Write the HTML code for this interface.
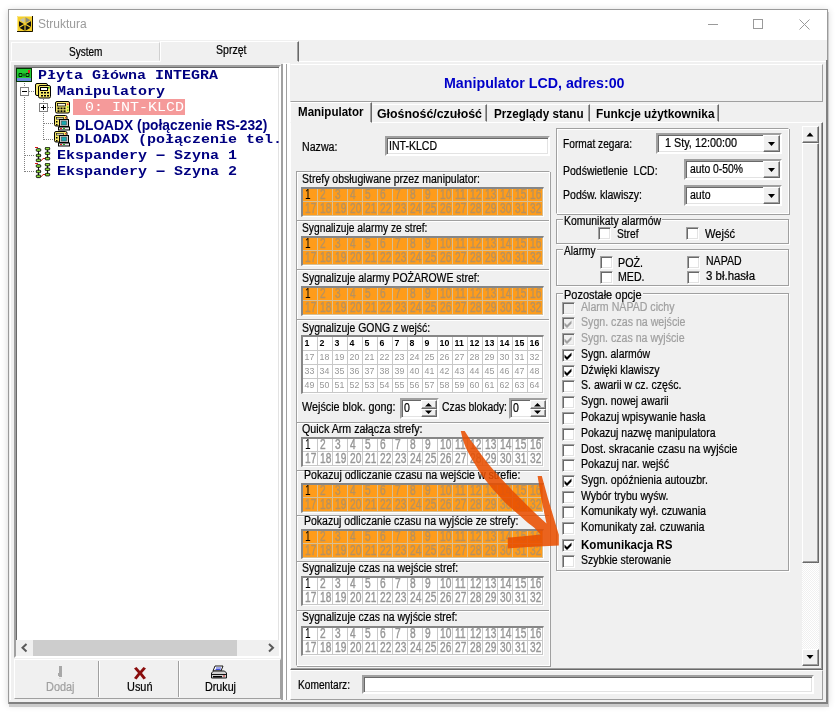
<!DOCTYPE html><html lang="pl"><head><meta charset="utf-8"><title>Struktura</title><style>
*{box-sizing:border-box;margin:0;padding:0}
html,body{width:836px;height:714px;overflow:hidden;background:#fff}
body{position:relative;font-family:"Liberation Sans",sans-serif;font-size:12px;color:#000}
.a{position:absolute}
.t{position:absolute;white-space:pre;font-size:12px;line-height:14px;transform:scaleX(.88);transform-origin:0 0;-webkit-text-stroke:.22px currentColor}
.tb{position:absolute;white-space:pre;font-size:12px;line-height:14px;font-weight:bold;transform:scaleX(.96);transform-origin:0 0}
.dis{color:#a0a0a0}
#win{left:8px;top:9px;width:820px;height:695px;border:1px solid #9a9a9a;background:#f0f0f0;box-shadow:1px 3px 0 0 #cbcbcb,0 1px 7px rgba(0,0,0,.16)}
#title{left:9px;top:10px;width:818px;height:30px;background:#fff}
.sunk{border:1px solid;border-color:#a0a0a0 #fff #fff #a0a0a0}
.sunk2{border:2px solid;border-color:#a0a0a0 #fff #fff #a0a0a0;box-shadow:inset 1px 1px 0 #696969,inset -1px -1px 0 #e3e3e3;background:#fff}
.raise{border:1px solid;border-color:#fff #a0a0a0 #a0a0a0 #fff}
.grp{position:absolute;border:1px solid;border-color:#a0a0a0 #fff #fff #a0a0a0;box-shadow:inset 1px 1px 0 #fff,1px 1px 0 #a0a0a0}
.fs{position:absolute;border:1px solid #a0a0a0;box-shadow:inset 1px 1px 0 #fff,1px 1px 0 #fff}
.cb{position:absolute;width:13px;height:13px;border:1px solid;border-color:#a0a0a0 #fff #fff #a0a0a0;box-shadow:inset 1px 1px 0 #696969,inset -1px -1px 0 #e3e3e3;background:#fff}
.cb.d{background:#f0f0f0}
.tree{position:absolute;white-space:pre;font:bold 15px/16px "Liberation Mono",monospace;color:#000080;transform:scaleY(.88);transform-origin:0 13px}
.grid{position:absolute;border-style:solid;border-width:2px 1px 1px 2px;border-color:#868686 #fff #fff #868686}
.grid i{position:absolute;font-style:normal;white-space:pre;font-size:14.5px;line-height:14px;transform:scaleX(.7);transform-origin:0 0;letter-spacing:0;-webkit-text-stroke:.4px currentColor}
.og{background:#ff9c1a}
.og i{color:#b8925f}
.wg{background:#fff}
.wg i{color:#969696}
.grid i.k{color:#000;-webkit-text-stroke:0}
.gl{position:absolute;background:#d6bf96}
.wl{position:absolute;background:#c8c8c8}
.gong i{font-size:8.8px;transform:none;line-height:10px;-webkit-text-stroke:0}
.gong i.k{font-weight:bold}
.btn{position:absolute;background:#f0f0f0;border:1px solid;border-color:#fff #696969 #696969 #fff;box-shadow:inset -1px -1px 0 #a0a0a0}
</style></head><body><div id="root" style="position:absolute;left:0;top:0;width:836px;height:714px;will-change:transform">
<div id="win" class="a"></div><div id="title" class="a"></div>
<svg class="a" style="left:17px;top:16px" width="16" height="16" viewBox="0 0 16 16"><rect x="0" y="0" width="16" height="16" fill="#f6cf2a"/><path d="M0 15.500H15.500V0" stroke="#1a1400" stroke-width="1" fill="none"/><path d="M0.500 15V0.500H15" stroke="#fbe88a" stroke-width="1" fill="none"/><path d="M8 8L8 1L2 4.500Z" fill="#c4c2b0"/><path d="M8 8L8 1L14 4.500Z" fill="#8f8d7c"/><path d="M8 8L14 4.500L14 11.500Z" fill="#111"/><path d="M8 8L14 11.500L8 15Z" fill="#111"/><path d="M8 8L8 15L2 11.500Z" fill="#111"/><path d="M8 8L2 11.500L2 4.500Z" fill="#111"/><path d="M8 1V15M2 4.500L14 11.500M14 4.500L2 11.500" stroke="#f6cf2a" stroke-width="1.100"/></svg>
<span class="a" style="left:38px;top:16px;font-size:12px;line-height:16px;color:#9b9b9b;white-space:pre">Struktura</span>
<svg class="a" style="left:700px;top:10px" width="127" height="30" viewBox="0 0 127 30"><g stroke="#9a9a9a" stroke-width="1" fill="none"><path d="M8 14.5H18"/><rect x="53.5" y="9.5" width="9" height="9"/><path d="M99.5 9.5L109.5 19.5M109.5 9.5L99.5 19.5"/></g></svg>
<div class="a" style="left:10px;top:61px;width:276px;height:639px;border-top:1px solid #fff;border-left:1px solid #fff"></div>
<div class="a" style="left:11px;top:42px;width:149px;height:19px;border:1px solid;border-color:#fff #d0d0d0 transparent #fff"></div>
<div class="a" style="left:160px;top:41px;width:139px;height:21px;background:#f0f0f0;border:1px solid;border-color:#fff #696969 transparent #fff;box-shadow:inset -1px 0 0 #a0a0a0"></div>
<span class="t" style="left:68.5px;top:45px;transform:scaleX(0.837);">System</span>
<span class="t" style="left:216px;top:43px;transform:scaleX(0.879);">Sprzęt</span>
<div class="a" style="left:299px;top:61px;width:527px;height:1px;background:#fff"></div>
<div class="a sunk2" style="left:14px;top:65px;width:267px;height:593px;"></div>
<div class="a" style="left:283px;top:63px;width:7px;height:637px;background:#fff"></div>
<div class="a" style="left:281px;top:64px;width:2px;height:636px;background:#a0a0a0"></div>
<div class="a" style="left:286px;top:64px;width:1px;height:636px;background:#a0a0a0"></div>
<svg class="a" style="left:15px;top:67px" width="64" height="116" viewBox="0 0 64 116"><g stroke="#808080" stroke-width="1" stroke-dasharray="1 1" fill="none" shape-rendering="crispEdges"><path d="M9.500 16V105"/><path d="M14 24.500H20"/><path d="M28.500 32V73"/><path d="M33 40.500H39"/><path d="M28.500 56.500H39"/><path d="M28.500 72.500H39"/><path d="M9.500 88.500H20"/><path d="M9.500 104.500H20"/></g><g fill="#fff" stroke="#808080" shape-rendering="crispEdges"><rect x="5.500" y="20.500" width="8" height="8"/><rect x="24.500" y="36.500" width="8" height="8"/></g><g stroke="#000" shape-rendering="crispEdges"><path d="M7 24.500H12"/><path d="M26 40.500H31M28.500 38V43"/></g></svg>
<svg class="a" style="left:16px;top:67px" width="16" height="16" viewBox="0 0 16 16"><rect x="0.5" y="1.5" width="15" height="13" fill="#22cc33" stroke="#003300"/><rect x="1" y="11" width="14" height="3" fill="#6a8ad8"/><path d="M3 6.5h3v3h-3zM8 6.5v3M10 6.5h3v3h-3z" stroke="#002200" fill="none"/><rect x="12" y="3" width="2" height="3" fill="#e02020"/></svg>
<svg class="a" style="left:35px;top:83px" width="16" height="16" viewBox="0 0 16 16"><rect x="0.5" y="0.5" width="12" height="12" rx="1.5" fill="#f7e96a" stroke="#000"/><rect x="3.5" y="2.5" width="12" height="12.500" rx="1.5" fill="#f7e96a" stroke="#000"/><rect x="5.5" y="4.5" width="7" height="3" fill="#fff" stroke="#000"/><g fill="#000"><rect x="6" y="9" width="2" height="1.5"/><rect x="9" y="9" width="2" height="1.5"/><rect x="12" y="9" width="2" height="1.5"/><rect x="6" y="12" width="2" height="1.5"/><rect x="9" y="12" width="2" height="1.5"/><rect x="12" y="12" width="2" height="1.5"/></g><rect x="13" y="4" width="1.5" height="1.5" fill="#2a2"/></svg>
<svg class="a" style="left:55px;top:101px" width="15" height="13" viewBox="0 0 15 13"><rect x="0.5" y="0.5" width="14" height="11.500" rx="1.5" fill="#f7e96a" stroke="#000"/><rect x="2.500" y="2.500" width="8" height="2.500" fill="#fffbe0" stroke="#000" stroke-width=".8"/><g fill="#000"><rect x="2.500" y="6.500" width="2" height="1.800"/><rect x="5.500" y="6.500" width="2" height="1.800"/><rect x="8.500" y="6.500" width="2" height="1.800"/><rect x="2.500" y="9.300" width="2" height="1.800"/><rect x="5.500" y="9.300" width="2" height="1.800"/><rect x="8.500" y="9.300" width="2" height="1.800"/></g><rect x="12" y="2.500" width="1.500" height="1.500" fill="#e33"/><rect x="12" y="5.500" width="1.500" height="1.500" fill="#7c2"/><rect x="12" y="8.500" width="1.500" height="1.500" fill="#7c2"/></svg>
<svg class="a" style="left:54px;top:115px" width="16" height="16" viewBox="0 0 16 16"><rect x="0.5" y="0.5" width="12.500" height="10.500" rx="1.5" fill="#f7e96a" stroke="#000"/><rect x="2.500" y="2.300" width="7" height="1.800" fill="#fffbe0" stroke="#000" stroke-width=".6"/><rect x="2" y="6" width="1.500" height="1.500" fill="#000"/><rect x="2" y="9" width="1.500" height="1.500" fill="#000"/><rect x="11" y="2" width="1.300" height="1.300" fill="#e33"/><rect x="5.500" y="4.500" width="9" height="7" fill="#c8c8c8" stroke="#000"/><rect x="7.500" y="6" width="5" height="4" fill="#18a8b0" stroke="#404040" stroke-width=".5"/><rect x="4.500" y="12" width="11" height="3" fill="#e8e8e8" stroke="#000"/><rect x="6" y="13" width="2" height="1" fill="#d22"/><rect x="9" y="13" width="2" height="1" fill="#2a2"/></svg>
<svg class="a" style="left:54px;top:131px" width="16" height="16" viewBox="0 0 16 16"><rect x="0.5" y="0.5" width="12.500" height="10.500" rx="1.5" fill="#f7e96a" stroke="#000"/><rect x="2.500" y="2.300" width="7" height="1.800" fill="#fffbe0" stroke="#000" stroke-width=".6"/><rect x="2" y="6" width="1.500" height="1.500" fill="#000"/><rect x="2" y="9" width="1.500" height="1.500" fill="#000"/><rect x="11" y="2" width="1.300" height="1.300" fill="#e33"/><rect x="5.500" y="4.500" width="9" height="7" fill="#c8c8c8" stroke="#000"/><rect x="7.500" y="6" width="5" height="4" fill="#18a8b0" stroke="#404040" stroke-width=".5"/><rect x="4.500" y="12" width="11" height="3" fill="#e8e8e8" stroke="#000"/><rect x="6" y="13" width="2" height="1" fill="#d22"/><rect x="9" y="13" width="2" height="1" fill="#2a2"/></svg>
<svg class="a" style="left:35px;top:147px" width="16" height="16" viewBox="0 0 16 16"><path d="M3.500 3V13M12.500 1.500V11.500" stroke="#000" stroke-width=".9"/><path d="M0 .5h3M4 13.500h2.500l1.500-2h3" stroke="#d81818" stroke-width="1" fill="none"/><rect x="1.2999999999999998" y="1.7" width="4.400" height="2.600" rx=".8" fill="#8ede3a" stroke="#000" stroke-width=".9"/><rect x="1.2999999999999998" y="7.2" width="4.400" height="2.600" rx=".8" fill="#8ede3a" stroke="#000" stroke-width=".9"/><rect x="1.2999999999999998" y="12.0" width="4.400" height="2.600" rx=".8" fill="#8ede3a" stroke="#000" stroke-width=".9"/><rect x="10.3" y="0.30000000000000004" width="4.400" height="2.600" rx=".8" fill="#8ede3a" stroke="#000" stroke-width=".9"/><rect x="10.3" y="5.0" width="4.400" height="2.600" rx=".8" fill="#8ede3a" stroke="#000" stroke-width=".9"/><rect x="10.3" y="10.299999999999999" width="4.400" height="2.600" rx=".8" fill="#8ede3a" stroke="#000" stroke-width=".9"/></svg>
<svg class="a" style="left:35px;top:163px" width="16" height="16" viewBox="0 0 16 16"><path d="M3.500 3V13M12.500 1.500V11.500" stroke="#000" stroke-width=".9"/><path d="M0 .5h3M4 13.500h2.500l1.500-2h3" stroke="#d81818" stroke-width="1" fill="none"/><rect x="1.2999999999999998" y="1.7" width="4.400" height="2.600" rx=".8" fill="#8ede3a" stroke="#000" stroke-width=".9"/><rect x="1.2999999999999998" y="7.2" width="4.400" height="2.600" rx=".8" fill="#8ede3a" stroke="#000" stroke-width=".9"/><rect x="1.2999999999999998" y="12.0" width="4.400" height="2.600" rx=".8" fill="#8ede3a" stroke="#000" stroke-width=".9"/><rect x="10.3" y="0.30000000000000004" width="4.400" height="2.600" rx=".8" fill="#8ede3a" stroke="#000" stroke-width=".9"/><rect x="10.3" y="5.0" width="4.400" height="2.600" rx=".8" fill="#8ede3a" stroke="#000" stroke-width=".9"/><rect x="10.3" y="10.299999999999999" width="4.400" height="2.600" rx=".8" fill="#8ede3a" stroke="#000" stroke-width=".9"/></svg>
<div class="a" style="left:73px;top:99px;width:112px;height:16px;background:#f59a9a"></div>
<span class="tree" style="left:38px;top:68px">Płyta Główna INTEGRA</span>
<span class="tree" style="left:57px;top:84px">Manipulatory</span>
<span class="tree" style="left:76px;top:100px;color:#fff;font-weight:normal"> 0: INT-KLCD</span>
<span class="tree" style="left:75px;top:116.5px;font-family:'Liberation Sans',sans-serif;font-size:14px;transform:scaleX(.985);transform-origin:0 0">DLOADX (połączenie RS-232)</span>
<span class="tree" style="left:75px;top:132px">DLOADX (połączenie tel.</span>
<span class="tree" style="left:57px;top:148px">Ekspandery <span style="display:inline-block;transform:scaleX(1.9)">-</span> Szyna 1</span>
<span class="tree" style="left:57px;top:164px">Ekspandery <span style="display:inline-block;transform:scaleX(1.9)">-</span> Szyna 2</span>
<div class="a" style="left:16px;top:640px;width:263px;height:16px;background:#f0f0f0"></div>
<div class="a" style="left:33px;top:640px;width:204px;height:16px;background:#cdcdcd"></div>
<svg class="a" style="left:16px;top:640px" width="265" height="17" viewBox="0 0 265 17"><g stroke="#5a5a5a" stroke-width="2" fill="none"><path d="M10.500 4L6.500 7.750L10.500 11.500"/><path d="M253 4L257 7.750L253 11.500"/></g></svg>
<div class="a" style="left:14px;top:659px;width:267px;height:40px;border:1px solid;border-color:#fff #a0a0a0 #a0a0a0 #fff"></div>
<div class="a" style="left:98px;top:661px;width:1px;height:36px;background:#a0a0a0"></div>
<div class="a" style="left:99px;top:661px;width:1px;height:36px;background:#fff"></div>
<div class="a" style="left:178px;top:661px;width:1px;height:36px;background:#a0a0a0"></div>
<div class="a" style="left:179px;top:661px;width:1px;height:36px;background:#fff"></div>
<span class="t dis" style="left:45.5px;top:680px;transform:scaleX(0.909);">Dodaj</span>
<span class="t" style="left:127px;top:680px;transform:scaleX(0.91);">Usuń</span>
<span class="t" style="left:204.5px;top:680px;transform:scaleX(0.894);">Drukuj</span>
<svg class="a" style="left:56px;top:665px" width="8" height="15" viewBox="0 0 8 15"><path d="M3 1h3v11h-3zM2 8h1v3h-1z" fill="#a8a8a8"/><path d="M4 13v1" stroke="#c8c8c8"/></svg>
<svg class="a" style="left:133px;top:666px" width="14" height="14" viewBox="0 0 14 14"><path d="M1 2.5L3.5 1L7 5L10.5 1L13 2.5L9 7L13 12L10.5 13.5L7 9L3.5 13.5L1 12L5 7Z" fill="#8a0d0d"/></svg>
<svg class="a" style="left:210px;top:665px" width="18" height="16" viewBox="0 0 18 16"><path d="M5 1h8l-2 5H3z" fill="#fff" stroke="#000" stroke-width=".9"/><path d="M6 3h5M5.5 4.5h5" stroke="#2a3ad0" stroke-width=".9"/><path d="M1.500 8l2-2h11l2 2v5h-15z" fill="#d0d0d0" stroke="#000" stroke-width=".9"/><path d="M1.500 9.500h15" stroke="#000" stroke-width=".9"/><rect x="3" y="11" width="9" height="1.500" fill="#000"/><rect x="13" y="10.500" width="2" height="1" fill="#c22"/></svg>
<div class="a" style="left:290px;top:64px;width:533px;height:38px;border:1px solid;border-color:#fff #a0a0a0 #a0a0a0 #f0f0f0"></div>
<span class="a" style="left:444px;top:74px;font:bold 15px/18px 'Liberation Sans',sans-serif;color:#0000c8;white-space:pre;transform:scaleX(.95);transform-origin:0 0">Manipulator LCD, adres:00</span>
<div class="a" style="left:290px;top:122px;width:533px;height:548px;border:1px solid;border-color:#fff #696969 #696969 #fff;box-shadow:inset -1px -1px 0 #a0a0a0"></div>
<div class="a" style="left:290px;top:102px;width:82px;height:21px;background:#f0f0f0;border:1px solid;border-color:#fff #696969 transparent #fff;box-shadow:inset -1px 0 0 #a0a0a0"></div>
<div class="a" style="left:372px;top:104px;width:115px;height:18px;border:1px solid;border-color:#fff #696969 transparent transparent;box-shadow:inset -1px 0 0 #a0a0a0"></div>
<div class="a" style="left:487px;top:104px;width:103px;height:18px;border:1px solid;border-color:#fff #696969 transparent transparent;box-shadow:inset -1px 0 0 #a0a0a0"></div>
<div class="a" style="left:590px;top:104px;width:129px;height:18px;border:1px solid;border-color:#fff #696969 transparent transparent;box-shadow:inset -1px 0 0 #a0a0a0"></div>
<span class="tb" style="left:297.5px;top:105px;transform:scaleX(0.963);">Manipulator</span>
<span class="tb" style="left:376.5px;top:107px;transform:scaleX(1.029);">Głośność/czułość</span>
<span class="tb" style="left:493.5px;top:107px;transform:scaleX(0.973);">Przeglądy stanu</span>
<span class="tb" style="left:595.5px;top:107px;transform:scaleX(0.987);">Funkcje użytkownika</span>
<div class="a" style="left:802px;top:126px;width:17px;height:540px;background:#f8f8f8;background-image:repeating-conic-gradient(#fff 0 25%,#f0f0f0 0 50%);background-size:2px 2px"></div>
<div class="btn" style="left:802px;top:126px;width:17px;height:17px;"></div>
<div class="btn" style="left:802px;top:649px;width:17px;height:17px;"></div>
<div class="btn" style="left:802px;top:143px;width:17px;height:420px;"></div>
<svg class="a" style="left:802px;top:126px" width="17" height="540" viewBox="0 0 17 540"><path d="M4.5 10.500h7l-3.500-4z" fill="#000"/><path d="M4.500 529h7l-3.500 4z" fill="#000"/></svg>
<span class="t" style="left:301.5px;top:140px;transform:scaleX(0.887);">Nazwa:</span>
<div class="a sunk2" style="left:385px;top:136px;width:165px;height:20px;"></div>
<span class="t" style="left:388.5px;top:139px;transform:scaleX(0.878);">INT-KLCD</span>
<div class="a" style="left:296px;top:171px;width:254px;height:495px;border:1px solid;border-color:#a0a0a0 #fff #fff #a0a0a0;box-shadow:inset 1px 1px 0 #fff,1px 1px 0 #a0a0a0"></div>
<span class="t" style="left:301.5px;top:172px;transform:scaleX(0.875);">Strefy obsługiwane przez manipulator:</span>
<div class="grid og" style="left:301px;top:187px;width:243px;height:30px"><b class="gl" style="left:14px;top:0;width:1px;height:26px"></b><b class="gl" style="left:29px;top:0;width:1px;height:26px"></b><b class="gl" style="left:44px;top:0;width:1px;height:26px"></b><b class="gl" style="left:59px;top:0;width:1px;height:26px"></b><b class="gl" style="left:74px;top:0;width:1px;height:26px"></b><b class="gl" style="left:89px;top:0;width:1px;height:26px"></b><b class="gl" style="left:104px;top:0;width:1px;height:26px"></b><b class="gl" style="left:119px;top:0;width:1px;height:26px"></b><b class="gl" style="left:134px;top:0;width:1px;height:26px"></b><b class="gl" style="left:149px;top:0;width:1px;height:26px"></b><b class="gl" style="left:164px;top:0;width:1px;height:26px"></b><b class="gl" style="left:179px;top:0;width:1px;height:26px"></b><b class="gl" style="left:194px;top:0;width:1px;height:26px"></b><b class="gl" style="left:209px;top:0;width:1px;height:26px"></b><b class="gl" style="left:224px;top:0;width:1px;height:26px"></b><b class="gl" style="left:239px;top:0;width:1px;height:26px"></b><b class="gl" style="left:0;top:12px;width:240px;height:1px"></b><b class="gl" style="left:0;top:26px;width:240px;height:1px"></b><i class="k" style="left:2px;top:-1.6px">1</i><i style="left:17px;top:-1.6px">2</i><i style="left:32px;top:-1.6px">3</i><i style="left:47px;top:-1.6px">4</i><i style="left:62px;top:-1.6px">5</i><i style="left:77px;top:-1.6px">6</i><i style="left:92px;top:-1.6px">7</i><i style="left:107px;top:-1.6px">8</i><i style="left:122px;top:-1.6px">9</i><i style="left:136.5px;top:-1.6px">10</i><i style="left:151.5px;top:-1.6px">11</i><i style="left:166.5px;top:-1.6px">12</i><i style="left:181.5px;top:-1.6px">13</i><i style="left:196.5px;top:-1.6px">14</i><i style="left:211.5px;top:-1.6px">15</i><i style="left:226.5px;top:-1.6px">16</i><i style="left:1.5px;top:12.4px">17</i><i style="left:16.5px;top:12.4px">18</i><i style="left:31.5px;top:12.4px">19</i><i style="left:46.5px;top:12.4px">20</i><i style="left:61.5px;top:12.4px">21</i><i style="left:76.5px;top:12.4px">22</i><i style="left:91.5px;top:12.4px">23</i><i style="left:106.5px;top:12.4px">24</i><i style="left:121.5px;top:12.4px">25</i><i style="left:136.5px;top:12.4px">26</i><i style="left:151.5px;top:12.4px">27</i><i style="left:166.5px;top:12.4px">28</i><i style="left:181.5px;top:12.4px">29</i><i style="left:196.5px;top:12.4px">30</i><i style="left:211.5px;top:12.4px">31</i><i style="left:226.5px;top:12.4px">32</i></div>
<div class="a" style="left:297px;top:220px;width:252px;height:1px;background:#a0a0a0"></div>
<div class="a" style="left:297px;top:221px;width:252px;height:1px;background:#fff"></div>
<span class="t" style="left:301.5px;top:221px;transform:scaleX(0.855);">Sygnalizuje alarmy ze stref:</span>
<div class="grid og" style="left:301px;top:236px;width:243px;height:30px"><b class="gl" style="left:14px;top:0;width:1px;height:26px"></b><b class="gl" style="left:29px;top:0;width:1px;height:26px"></b><b class="gl" style="left:44px;top:0;width:1px;height:26px"></b><b class="gl" style="left:59px;top:0;width:1px;height:26px"></b><b class="gl" style="left:74px;top:0;width:1px;height:26px"></b><b class="gl" style="left:89px;top:0;width:1px;height:26px"></b><b class="gl" style="left:104px;top:0;width:1px;height:26px"></b><b class="gl" style="left:119px;top:0;width:1px;height:26px"></b><b class="gl" style="left:134px;top:0;width:1px;height:26px"></b><b class="gl" style="left:149px;top:0;width:1px;height:26px"></b><b class="gl" style="left:164px;top:0;width:1px;height:26px"></b><b class="gl" style="left:179px;top:0;width:1px;height:26px"></b><b class="gl" style="left:194px;top:0;width:1px;height:26px"></b><b class="gl" style="left:209px;top:0;width:1px;height:26px"></b><b class="gl" style="left:224px;top:0;width:1px;height:26px"></b><b class="gl" style="left:239px;top:0;width:1px;height:26px"></b><b class="gl" style="left:0;top:12px;width:240px;height:1px"></b><b class="gl" style="left:0;top:26px;width:240px;height:1px"></b><i class="k" style="left:2px;top:-1.6px">1</i><i style="left:17px;top:-1.6px">2</i><i style="left:32px;top:-1.6px">3</i><i style="left:47px;top:-1.6px">4</i><i style="left:62px;top:-1.6px">5</i><i style="left:77px;top:-1.6px">6</i><i style="left:92px;top:-1.6px">7</i><i style="left:107px;top:-1.6px">8</i><i style="left:122px;top:-1.6px">9</i><i style="left:136.5px;top:-1.6px">10</i><i style="left:151.5px;top:-1.6px">11</i><i style="left:166.5px;top:-1.6px">12</i><i style="left:181.5px;top:-1.6px">13</i><i style="left:196.5px;top:-1.6px">14</i><i style="left:211.5px;top:-1.6px">15</i><i style="left:226.5px;top:-1.6px">16</i><i style="left:1.5px;top:12.4px">17</i><i style="left:16.5px;top:12.4px">18</i><i style="left:31.5px;top:12.4px">19</i><i style="left:46.5px;top:12.4px">20</i><i style="left:61.5px;top:12.4px">21</i><i style="left:76.5px;top:12.4px">22</i><i style="left:91.5px;top:12.4px">23</i><i style="left:106.5px;top:12.4px">24</i><i style="left:121.5px;top:12.4px">25</i><i style="left:136.5px;top:12.4px">26</i><i style="left:151.5px;top:12.4px">27</i><i style="left:166.5px;top:12.4px">28</i><i style="left:181.5px;top:12.4px">29</i><i style="left:196.5px;top:12.4px">30</i><i style="left:211.5px;top:12.4px">31</i><i style="left:226.5px;top:12.4px">32</i></div>
<div class="a" style="left:297px;top:269px;width:252px;height:1px;background:#a0a0a0"></div>
<div class="a" style="left:297px;top:270px;width:252px;height:1px;background:#fff"></div>
<span class="t" style="left:301.5px;top:271px;transform:scaleX(0.87);">Sygnalizuje alarmy POŻAROWE stref:</span>
<div class="grid og" style="left:301px;top:286px;width:243px;height:30px"><b class="gl" style="left:14px;top:0;width:1px;height:26px"></b><b class="gl" style="left:29px;top:0;width:1px;height:26px"></b><b class="gl" style="left:44px;top:0;width:1px;height:26px"></b><b class="gl" style="left:59px;top:0;width:1px;height:26px"></b><b class="gl" style="left:74px;top:0;width:1px;height:26px"></b><b class="gl" style="left:89px;top:0;width:1px;height:26px"></b><b class="gl" style="left:104px;top:0;width:1px;height:26px"></b><b class="gl" style="left:119px;top:0;width:1px;height:26px"></b><b class="gl" style="left:134px;top:0;width:1px;height:26px"></b><b class="gl" style="left:149px;top:0;width:1px;height:26px"></b><b class="gl" style="left:164px;top:0;width:1px;height:26px"></b><b class="gl" style="left:179px;top:0;width:1px;height:26px"></b><b class="gl" style="left:194px;top:0;width:1px;height:26px"></b><b class="gl" style="left:209px;top:0;width:1px;height:26px"></b><b class="gl" style="left:224px;top:0;width:1px;height:26px"></b><b class="gl" style="left:239px;top:0;width:1px;height:26px"></b><b class="gl" style="left:0;top:12px;width:240px;height:1px"></b><b class="gl" style="left:0;top:26px;width:240px;height:1px"></b><i class="k" style="left:2px;top:-1.6px">1</i><i style="left:17px;top:-1.6px">2</i><i style="left:32px;top:-1.6px">3</i><i style="left:47px;top:-1.6px">4</i><i style="left:62px;top:-1.6px">5</i><i style="left:77px;top:-1.6px">6</i><i style="left:92px;top:-1.6px">7</i><i style="left:107px;top:-1.6px">8</i><i style="left:122px;top:-1.6px">9</i><i style="left:136.5px;top:-1.6px">10</i><i style="left:151.5px;top:-1.6px">11</i><i style="left:166.5px;top:-1.6px">12</i><i style="left:181.5px;top:-1.6px">13</i><i style="left:196.5px;top:-1.6px">14</i><i style="left:211.5px;top:-1.6px">15</i><i style="left:226.5px;top:-1.6px">16</i><i style="left:1.5px;top:12.4px">17</i><i style="left:16.5px;top:12.4px">18</i><i style="left:31.5px;top:12.4px">19</i><i style="left:46.5px;top:12.4px">20</i><i style="left:61.5px;top:12.4px">21</i><i style="left:76.5px;top:12.4px">22</i><i style="left:91.5px;top:12.4px">23</i><i style="left:106.5px;top:12.4px">24</i><i style="left:121.5px;top:12.4px">25</i><i style="left:136.5px;top:12.4px">26</i><i style="left:151.5px;top:12.4px">27</i><i style="left:166.5px;top:12.4px">28</i><i style="left:181.5px;top:12.4px">29</i><i style="left:196.5px;top:12.4px">30</i><i style="left:211.5px;top:12.4px">31</i><i style="left:226.5px;top:12.4px">32</i></div>
<div class="a" style="left:297px;top:319px;width:252px;height:1px;background:#a0a0a0"></div>
<div class="a" style="left:297px;top:320px;width:252px;height:1px;background:#fff"></div>
<span class="t" style="left:301.5px;top:321px;transform:scaleX(0.869);">Sygnalizuje GONG z wejść:</span>
<div class="grid wg gong" style="left:301px;top:335px;width:243px;height:59px"><b class="wl" style="left:14px;top:0;width:1px;height:55px"></b><b class="wl" style="left:29px;top:0;width:1px;height:55px"></b><b class="wl" style="left:44px;top:0;width:1px;height:55px"></b><b class="wl" style="left:59px;top:0;width:1px;height:55px"></b><b class="wl" style="left:74px;top:0;width:1px;height:55px"></b><b class="wl" style="left:89px;top:0;width:1px;height:55px"></b><b class="wl" style="left:104px;top:0;width:1px;height:55px"></b><b class="wl" style="left:119px;top:0;width:1px;height:55px"></b><b class="wl" style="left:134px;top:0;width:1px;height:55px"></b><b class="wl" style="left:149px;top:0;width:1px;height:55px"></b><b class="wl" style="left:164px;top:0;width:1px;height:55px"></b><b class="wl" style="left:179px;top:0;width:1px;height:55px"></b><b class="wl" style="left:194px;top:0;width:1px;height:55px"></b><b class="wl" style="left:209px;top:0;width:1px;height:55px"></b><b class="wl" style="left:224px;top:0;width:1px;height:55px"></b><b class="wl" style="left:239px;top:0;width:1px;height:55px"></b><b class="wl" style="left:0;top:13px;width:240px;height:1px"></b><b class="wl" style="left:0;top:27px;width:240px;height:1px"></b><b class="wl" style="left:0;top:41px;width:240px;height:1px"></b><b class="wl" style="left:0;top:55px;width:240px;height:1px"></b><i class="k" style="left:1.5px;top:0.9px">1</i><i class="k" style="left:16.5px;top:0.9px">2</i><i class="k" style="left:31.5px;top:0.9px">3</i><i class="k" style="left:46.5px;top:0.9px">4</i><i class="k" style="left:61.5px;top:0.9px">5</i><i class="k" style="left:76.5px;top:0.9px">6</i><i class="k" style="left:91.5px;top:0.9px">7</i><i class="k" style="left:106.5px;top:0.9px">8</i><i class="k" style="left:121.5px;top:0.9px">9</i><i class="k" style="left:136.5px;top:0.9px">10</i><i class="k" style="left:151.5px;top:0.9px">11</i><i class="k" style="left:166.5px;top:0.9px">12</i><i class="k" style="left:181.5px;top:0.9px">13</i><i class="k" style="left:196.5px;top:0.9px">14</i><i class="k" style="left:211.5px;top:0.9px">15</i><i class="k" style="left:226.5px;top:0.9px">16</i><i style="left:1.5px;top:14.9px">17</i><i style="left:16.5px;top:14.9px">18</i><i style="left:31.5px;top:14.9px">19</i><i style="left:46.5px;top:14.9px">20</i><i style="left:61.5px;top:14.9px">21</i><i style="left:76.5px;top:14.9px">22</i><i style="left:91.5px;top:14.9px">23</i><i style="left:106.5px;top:14.9px">24</i><i style="left:121.5px;top:14.9px">25</i><i style="left:136.5px;top:14.9px">26</i><i style="left:151.5px;top:14.9px">27</i><i style="left:166.5px;top:14.9px">28</i><i style="left:181.5px;top:14.9px">29</i><i style="left:196.5px;top:14.9px">30</i><i style="left:211.5px;top:14.9px">31</i><i style="left:226.5px;top:14.9px">32</i><i style="left:1.5px;top:28.9px">33</i><i style="left:16.5px;top:28.9px">34</i><i style="left:31.5px;top:28.9px">35</i><i style="left:46.5px;top:28.9px">36</i><i style="left:61.5px;top:28.9px">37</i><i style="left:76.5px;top:28.9px">38</i><i style="left:91.5px;top:28.9px">39</i><i style="left:106.5px;top:28.9px">40</i><i style="left:121.5px;top:28.9px">41</i><i style="left:136.5px;top:28.9px">42</i><i style="left:151.5px;top:28.9px">43</i><i style="left:166.5px;top:28.9px">44</i><i style="left:181.5px;top:28.9px">45</i><i style="left:196.5px;top:28.9px">46</i><i style="left:211.5px;top:28.9px">47</i><i style="left:226.5px;top:28.9px">48</i><i style="left:1.5px;top:42.9px">49</i><i style="left:16.5px;top:42.9px">50</i><i style="left:31.5px;top:42.9px">51</i><i style="left:46.5px;top:42.9px">52</i><i style="left:61.5px;top:42.9px">53</i><i style="left:76.5px;top:42.9px">54</i><i style="left:91.5px;top:42.9px">55</i><i style="left:106.5px;top:42.9px">56</i><i style="left:121.5px;top:42.9px">57</i><i style="left:136.5px;top:42.9px">58</i><i style="left:151.5px;top:42.9px">59</i><i style="left:166.5px;top:42.9px">60</i><i style="left:181.5px;top:42.9px">61</i><i style="left:196.5px;top:42.9px">62</i><i style="left:211.5px;top:42.9px">63</i><i style="left:226.5px;top:42.9px">64</i></div>
<span class="t" style="left:301.5px;top:400px;transform:scaleX(0.9);">Wejście blok. gong:</span>
<div class="a sunk2" style="left:400px;top:398px;width:39px;height:21px;"></div>
<span class="t" style="left:404px;top:401px;">0</span>
<span class="t" style="left:441.5px;top:400px;transform:scaleX(0.862);">Czas blokady:</span>
<div class="a sunk2" style="left:509px;top:398px;width:39px;height:21px;"></div>
<span class="t" style="left:513px;top:401px;">0</span>
<div class="btn" style="left:421px;top:400px;width:16px;height:9px;"></div>
<div class="btn" style="left:421px;top:409px;width:16px;height:8px;"></div>
<svg class="a" style="left:421px;top:400px" width="16" height="17" viewBox="0 0 16 17"><path d="M4 6.500h7l-3.500-3.500zM4 10.500h7l-3.500 3.500z" fill="#000"/></svg>
<div class="btn" style="left:530px;top:400px;width:16px;height:9px;"></div>
<div class="btn" style="left:530px;top:409px;width:16px;height:8px;"></div>
<svg class="a" style="left:530px;top:400px" width="16" height="17" viewBox="0 0 16 17"><path d="M4 6.500h7l-3.500-3.500zM4 10.500h7l-3.500 3.500z" fill="#000"/></svg>
<div class="a" style="left:297px;top:422px;width:252px;height:1px;background:#a0a0a0"></div>
<div class="a" style="left:297px;top:423px;width:252px;height:1px;background:#fff"></div>
<span class="t" style="left:301.5px;top:422px;transform:scaleX(0.89);">Quick Arm załącza strefy:</span>
<div class="grid wg" style="left:301px;top:437px;width:243px;height:30px"><b class="wl" style="left:14px;top:0;width:1px;height:26px"></b><b class="wl" style="left:29px;top:0;width:1px;height:26px"></b><b class="wl" style="left:44px;top:0;width:1px;height:26px"></b><b class="wl" style="left:59px;top:0;width:1px;height:26px"></b><b class="wl" style="left:74px;top:0;width:1px;height:26px"></b><b class="wl" style="left:89px;top:0;width:1px;height:26px"></b><b class="wl" style="left:104px;top:0;width:1px;height:26px"></b><b class="wl" style="left:119px;top:0;width:1px;height:26px"></b><b class="wl" style="left:134px;top:0;width:1px;height:26px"></b><b class="wl" style="left:149px;top:0;width:1px;height:26px"></b><b class="wl" style="left:164px;top:0;width:1px;height:26px"></b><b class="wl" style="left:179px;top:0;width:1px;height:26px"></b><b class="wl" style="left:194px;top:0;width:1px;height:26px"></b><b class="wl" style="left:209px;top:0;width:1px;height:26px"></b><b class="wl" style="left:224px;top:0;width:1px;height:26px"></b><b class="wl" style="left:239px;top:0;width:1px;height:26px"></b><b class="wl" style="left:0;top:12px;width:240px;height:1px"></b><b class="wl" style="left:0;top:26px;width:240px;height:1px"></b><i class="k" style="left:2px;top:-1.6px">1</i><i style="left:17px;top:-1.6px">2</i><i style="left:32px;top:-1.6px">3</i><i style="left:47px;top:-1.6px">4</i><i style="left:62px;top:-1.6px">5</i><i style="left:77px;top:-1.6px">6</i><i style="left:92px;top:-1.6px">7</i><i style="left:107px;top:-1.6px">8</i><i style="left:122px;top:-1.6px">9</i><i style="left:136.5px;top:-1.6px">10</i><i style="left:151.5px;top:-1.6px">11</i><i style="left:166.5px;top:-1.6px">12</i><i style="left:181.5px;top:-1.6px">13</i><i style="left:196.5px;top:-1.6px">14</i><i style="left:211.5px;top:-1.6px">15</i><i style="left:226.5px;top:-1.6px">16</i><i style="left:1.5px;top:12.4px">17</i><i style="left:16.5px;top:12.4px">18</i><i style="left:31.5px;top:12.4px">19</i><i style="left:46.5px;top:12.4px">20</i><i style="left:61.5px;top:12.4px">21</i><i style="left:76.5px;top:12.4px">22</i><i style="left:91.5px;top:12.4px">23</i><i style="left:106.5px;top:12.4px">24</i><i style="left:121.5px;top:12.4px">25</i><i style="left:136.5px;top:12.4px">26</i><i style="left:151.5px;top:12.4px">27</i><i style="left:166.5px;top:12.4px">28</i><i style="left:181.5px;top:12.4px">29</i><i style="left:196.5px;top:12.4px">30</i><i style="left:211.5px;top:12.4px">31</i><i style="left:226.5px;top:12.4px">32</i></div>
<div class="a" style="left:297px;top:470px;width:252px;height:1px;background:#a0a0a0"></div>
<div class="a" style="left:297px;top:471px;width:252px;height:1px;background:#fff"></div>
<span class="t" style="left:303.5px;top:468px;transform:scaleX(0.884);">Pokazuj odliczanie czasu na wejście w strefie:</span>
<div class="grid og" style="left:301px;top:483px;width:243px;height:30px"><b class="gl" style="left:14px;top:0;width:1px;height:26px"></b><b class="gl" style="left:29px;top:0;width:1px;height:26px"></b><b class="gl" style="left:44px;top:0;width:1px;height:26px"></b><b class="gl" style="left:59px;top:0;width:1px;height:26px"></b><b class="gl" style="left:74px;top:0;width:1px;height:26px"></b><b class="gl" style="left:89px;top:0;width:1px;height:26px"></b><b class="gl" style="left:104px;top:0;width:1px;height:26px"></b><b class="gl" style="left:119px;top:0;width:1px;height:26px"></b><b class="gl" style="left:134px;top:0;width:1px;height:26px"></b><b class="gl" style="left:149px;top:0;width:1px;height:26px"></b><b class="gl" style="left:164px;top:0;width:1px;height:26px"></b><b class="gl" style="left:179px;top:0;width:1px;height:26px"></b><b class="gl" style="left:194px;top:0;width:1px;height:26px"></b><b class="gl" style="left:209px;top:0;width:1px;height:26px"></b><b class="gl" style="left:224px;top:0;width:1px;height:26px"></b><b class="gl" style="left:239px;top:0;width:1px;height:26px"></b><b class="gl" style="left:0;top:12px;width:240px;height:1px"></b><b class="gl" style="left:0;top:26px;width:240px;height:1px"></b><i class="k" style="left:2px;top:-1.6px">1</i><i style="left:17px;top:-1.6px">2</i><i style="left:32px;top:-1.6px">3</i><i style="left:47px;top:-1.6px">4</i><i style="left:62px;top:-1.6px">5</i><i style="left:77px;top:-1.6px">6</i><i style="left:92px;top:-1.6px">7</i><i style="left:107px;top:-1.6px">8</i><i style="left:122px;top:-1.6px">9</i><i style="left:136.5px;top:-1.6px">10</i><i style="left:151.5px;top:-1.6px">11</i><i style="left:166.5px;top:-1.6px">12</i><i style="left:181.5px;top:-1.6px">13</i><i style="left:196.5px;top:-1.6px">14</i><i style="left:211.5px;top:-1.6px">15</i><i style="left:226.5px;top:-1.6px">16</i><i style="left:1.5px;top:12.4px">17</i><i style="left:16.5px;top:12.4px">18</i><i style="left:31.5px;top:12.4px">19</i><i style="left:46.5px;top:12.4px">20</i><i style="left:61.5px;top:12.4px">21</i><i style="left:76.5px;top:12.4px">22</i><i style="left:91.5px;top:12.4px">23</i><i style="left:106.5px;top:12.4px">24</i><i style="left:121.5px;top:12.4px">25</i><i style="left:136.5px;top:12.4px">26</i><i style="left:151.5px;top:12.4px">27</i><i style="left:166.5px;top:12.4px">28</i><i style="left:181.5px;top:12.4px">29</i><i style="left:196.5px;top:12.4px">30</i><i style="left:211.5px;top:12.4px">31</i><i style="left:226.5px;top:12.4px">32</i></div>
<div class="a" style="left:297px;top:515px;width:252px;height:1px;background:#a0a0a0"></div>
<div class="a" style="left:297px;top:516px;width:252px;height:1px;background:#fff"></div>
<span class="t" style="left:303.5px;top:514px;transform:scaleX(0.876);">Pokazuj odliczanie czasu na wyjście ze strefy:</span>
<div class="grid og" style="left:301px;top:529px;width:243px;height:30px"><b class="gl" style="left:14px;top:0;width:1px;height:26px"></b><b class="gl" style="left:29px;top:0;width:1px;height:26px"></b><b class="gl" style="left:44px;top:0;width:1px;height:26px"></b><b class="gl" style="left:59px;top:0;width:1px;height:26px"></b><b class="gl" style="left:74px;top:0;width:1px;height:26px"></b><b class="gl" style="left:89px;top:0;width:1px;height:26px"></b><b class="gl" style="left:104px;top:0;width:1px;height:26px"></b><b class="gl" style="left:119px;top:0;width:1px;height:26px"></b><b class="gl" style="left:134px;top:0;width:1px;height:26px"></b><b class="gl" style="left:149px;top:0;width:1px;height:26px"></b><b class="gl" style="left:164px;top:0;width:1px;height:26px"></b><b class="gl" style="left:179px;top:0;width:1px;height:26px"></b><b class="gl" style="left:194px;top:0;width:1px;height:26px"></b><b class="gl" style="left:209px;top:0;width:1px;height:26px"></b><b class="gl" style="left:224px;top:0;width:1px;height:26px"></b><b class="gl" style="left:239px;top:0;width:1px;height:26px"></b><b class="gl" style="left:0;top:12px;width:240px;height:1px"></b><b class="gl" style="left:0;top:26px;width:240px;height:1px"></b><i class="k" style="left:2px;top:-1.6px">1</i><i style="left:17px;top:-1.6px">2</i><i style="left:32px;top:-1.6px">3</i><i style="left:47px;top:-1.6px">4</i><i style="left:62px;top:-1.6px">5</i><i style="left:77px;top:-1.6px">6</i><i style="left:92px;top:-1.6px">7</i><i style="left:107px;top:-1.6px">8</i><i style="left:122px;top:-1.6px">9</i><i style="left:136.5px;top:-1.6px">10</i><i style="left:151.5px;top:-1.6px">11</i><i style="left:166.5px;top:-1.6px">12</i><i style="left:181.5px;top:-1.6px">13</i><i style="left:196.5px;top:-1.6px">14</i><i style="left:211.5px;top:-1.6px">15</i><i style="left:226.5px;top:-1.6px">16</i><i style="left:1.5px;top:12.4px">17</i><i style="left:16.5px;top:12.4px">18</i><i style="left:31.5px;top:12.4px">19</i><i style="left:46.5px;top:12.4px">20</i><i style="left:61.5px;top:12.4px">21</i><i style="left:76.5px;top:12.4px">22</i><i style="left:91.5px;top:12.4px">23</i><i style="left:106.5px;top:12.4px">24</i><i style="left:121.5px;top:12.4px">25</i><i style="left:136.5px;top:12.4px">26</i><i style="left:151.5px;top:12.4px">27</i><i style="left:166.5px;top:12.4px">28</i><i style="left:181.5px;top:12.4px">29</i><i style="left:196.5px;top:12.4px">30</i><i style="left:211.5px;top:12.4px">31</i><i style="left:226.5px;top:12.4px">32</i></div>
<div class="a" style="left:297px;top:561px;width:252px;height:1px;background:#a0a0a0"></div>
<div class="a" style="left:297px;top:562px;width:252px;height:1px;background:#fff"></div>
<span class="t" style="left:301.5px;top:561px;transform:scaleX(0.873);">Sygnalizuje czas na wejście stref:</span>
<div class="grid wg" style="left:301px;top:576px;width:243px;height:30px"><b class="wl" style="left:14px;top:0;width:1px;height:26px"></b><b class="wl" style="left:29px;top:0;width:1px;height:26px"></b><b class="wl" style="left:44px;top:0;width:1px;height:26px"></b><b class="wl" style="left:59px;top:0;width:1px;height:26px"></b><b class="wl" style="left:74px;top:0;width:1px;height:26px"></b><b class="wl" style="left:89px;top:0;width:1px;height:26px"></b><b class="wl" style="left:104px;top:0;width:1px;height:26px"></b><b class="wl" style="left:119px;top:0;width:1px;height:26px"></b><b class="wl" style="left:134px;top:0;width:1px;height:26px"></b><b class="wl" style="left:149px;top:0;width:1px;height:26px"></b><b class="wl" style="left:164px;top:0;width:1px;height:26px"></b><b class="wl" style="left:179px;top:0;width:1px;height:26px"></b><b class="wl" style="left:194px;top:0;width:1px;height:26px"></b><b class="wl" style="left:209px;top:0;width:1px;height:26px"></b><b class="wl" style="left:224px;top:0;width:1px;height:26px"></b><b class="wl" style="left:239px;top:0;width:1px;height:26px"></b><b class="wl" style="left:0;top:12px;width:240px;height:1px"></b><b class="wl" style="left:0;top:26px;width:240px;height:1px"></b><i class="k" style="left:2px;top:-1.6px">1</i><i style="left:17px;top:-1.6px">2</i><i style="left:32px;top:-1.6px">3</i><i style="left:47px;top:-1.6px">4</i><i style="left:62px;top:-1.6px">5</i><i style="left:77px;top:-1.6px">6</i><i style="left:92px;top:-1.6px">7</i><i style="left:107px;top:-1.6px">8</i><i style="left:122px;top:-1.6px">9</i><i style="left:136.5px;top:-1.6px">10</i><i style="left:151.5px;top:-1.6px">11</i><i style="left:166.5px;top:-1.6px">12</i><i style="left:181.5px;top:-1.6px">13</i><i style="left:196.5px;top:-1.6px">14</i><i style="left:211.5px;top:-1.6px">15</i><i style="left:226.5px;top:-1.6px">16</i><i style="left:1.5px;top:12.4px">17</i><i style="left:16.5px;top:12.4px">18</i><i style="left:31.5px;top:12.4px">19</i><i style="left:46.5px;top:12.4px">20</i><i style="left:61.5px;top:12.4px">21</i><i style="left:76.5px;top:12.4px">22</i><i style="left:91.5px;top:12.4px">23</i><i style="left:106.5px;top:12.4px">24</i><i style="left:121.5px;top:12.4px">25</i><i style="left:136.5px;top:12.4px">26</i><i style="left:151.5px;top:12.4px">27</i><i style="left:166.5px;top:12.4px">28</i><i style="left:181.5px;top:12.4px">29</i><i style="left:196.5px;top:12.4px">30</i><i style="left:211.5px;top:12.4px">31</i><i style="left:226.5px;top:12.4px">32</i></div>
<div class="a" style="left:297px;top:610px;width:252px;height:1px;background:#a0a0a0"></div>
<div class="a" style="left:297px;top:611px;width:252px;height:1px;background:#fff"></div>
<span class="t" style="left:301.5px;top:610px;transform:scaleX(0.873);">Sygnalizuje czas na wyjście stref:</span>
<div class="grid wg" style="left:301px;top:626px;width:243px;height:30px"><b class="wl" style="left:14px;top:0;width:1px;height:26px"></b><b class="wl" style="left:29px;top:0;width:1px;height:26px"></b><b class="wl" style="left:44px;top:0;width:1px;height:26px"></b><b class="wl" style="left:59px;top:0;width:1px;height:26px"></b><b class="wl" style="left:74px;top:0;width:1px;height:26px"></b><b class="wl" style="left:89px;top:0;width:1px;height:26px"></b><b class="wl" style="left:104px;top:0;width:1px;height:26px"></b><b class="wl" style="left:119px;top:0;width:1px;height:26px"></b><b class="wl" style="left:134px;top:0;width:1px;height:26px"></b><b class="wl" style="left:149px;top:0;width:1px;height:26px"></b><b class="wl" style="left:164px;top:0;width:1px;height:26px"></b><b class="wl" style="left:179px;top:0;width:1px;height:26px"></b><b class="wl" style="left:194px;top:0;width:1px;height:26px"></b><b class="wl" style="left:209px;top:0;width:1px;height:26px"></b><b class="wl" style="left:224px;top:0;width:1px;height:26px"></b><b class="wl" style="left:239px;top:0;width:1px;height:26px"></b><b class="wl" style="left:0;top:12px;width:240px;height:1px"></b><b class="wl" style="left:0;top:26px;width:240px;height:1px"></b><i class="k" style="left:2px;top:-1.6px">1</i><i style="left:17px;top:-1.6px">2</i><i style="left:32px;top:-1.6px">3</i><i style="left:47px;top:-1.6px">4</i><i style="left:62px;top:-1.6px">5</i><i style="left:77px;top:-1.6px">6</i><i style="left:92px;top:-1.6px">7</i><i style="left:107px;top:-1.6px">8</i><i style="left:122px;top:-1.6px">9</i><i style="left:136.5px;top:-1.6px">10</i><i style="left:151.5px;top:-1.6px">11</i><i style="left:166.5px;top:-1.6px">12</i><i style="left:181.5px;top:-1.6px">13</i><i style="left:196.5px;top:-1.6px">14</i><i style="left:211.5px;top:-1.6px">15</i><i style="left:226.5px;top:-1.6px">16</i><i style="left:1.5px;top:12.4px">17</i><i style="left:16.5px;top:12.4px">18</i><i style="left:31.5px;top:12.4px">19</i><i style="left:46.5px;top:12.4px">20</i><i style="left:61.5px;top:12.4px">21</i><i style="left:76.5px;top:12.4px">22</i><i style="left:91.5px;top:12.4px">23</i><i style="left:106.5px;top:12.4px">24</i><i style="left:121.5px;top:12.4px">25</i><i style="left:136.5px;top:12.4px">26</i><i style="left:151.5px;top:12.4px">27</i><i style="left:166.5px;top:12.4px">28</i><i style="left:181.5px;top:12.4px">29</i><i style="left:196.5px;top:12.4px">30</i><i style="left:211.5px;top:12.4px">31</i><i style="left:226.5px;top:12.4px">32</i></div>
<div class="grp" style="left:556px;top:128px;width:233px;height:86px;"></div>
<span class="t" style="left:562.5px;top:137px;transform:scaleX(0.848);">Format zegara:</span>
<span class="t" style="left:562.5px;top:164px;transform:scaleX(0.875);">Podświetlenie  LCD:</span>
<span class="t" style="left:562.5px;top:188px;transform:scaleX(0.878);">Podśw. klawiszy:</span>
<div class="a sunk2" style="left:656px;top:133px;width:126px;height:21px;"></div>
<div class="btn" style="left:763px;top:135px;width:17px;height:17px;"></div>
<svg class="a" style="left:763px;top:135px" width="17" height="17" viewBox="0 0 17 17"><path d="M5 7h7l-3.500 4z" fill="#000"/></svg>
<span class="t" style="left:664.5px;top:136px;transform:scaleX(0.902);">1 Sty, 12:00:00</span>
<div class="a sunk2" style="left:684px;top:159px;width:98px;height:21px;"></div>
<div class="btn" style="left:763px;top:161px;width:17px;height:17px;"></div>
<svg class="a" style="left:763px;top:161px" width="17" height="17" viewBox="0 0 17 17"><path d="M5 7h7l-3.500 4z" fill="#000"/></svg>
<span class="t" style="left:689.5px;top:162px;transform:scaleX(0.864);">auto 0-50%</span>
<div class="a sunk2" style="left:684px;top:185px;width:98px;height:21px;"></div>
<div class="btn" style="left:763px;top:187px;width:17px;height:17px;"></div>
<svg class="a" style="left:763px;top:187px" width="17" height="17" viewBox="0 0 17 17"><path d="M5 7h7l-3.500 4z" fill="#000"/></svg>
<span class="t" style="left:689.5px;top:188px;transform:scaleX(0.878);">auto</span>
<div class="fs" style="left:556px;top:219px;width:233px;height:25px;"></div>
<div class="a" style="left:563px;top:217px;width:99px;height:6px;background:#f0f0f0"></div>
<span class="t" style="left:564px;top:213.5px;transform:scaleX(0.871);">Komunikaty alarmów</span>
<div class="cb" style="left:598px;top:227px"></div>
<span class="t" style="left:616.5px;top:227px;transform:scaleX(0.848);">Stref</span>
<div class="cb" style="left:686px;top:227px"></div>
<span class="t" style="left:704.5px;top:227px;transform:scaleX(0.925);">Wejść</span>
<div class="fs" style="left:556px;top:249px;width:233px;height:37px;"></div>
<div class="a" style="left:563px;top:247px;width:34px;height:6px;background:#f0f0f0"></div>
<span class="t" style="left:564px;top:243.5px;transform:scaleX(0.844);">Alarmy</span>
<div class="cb" style="left:600px;top:256px"></div>
<span class="t" style="left:618px;top:255.5px;transform:scaleX(0.893);">POŻ.</span>
<div class="cb" style="left:600px;top:271px"></div>
<span class="t" style="left:618px;top:270px;transform:scaleX(0.883);">MED.</span>
<div class="cb" style="left:687px;top:256px"></div>
<span class="t" style="left:705.5px;top:254px;transform:scaleX(0.878);">NAPAD</span>
<div class="cb" style="left:687px;top:271px"></div>
<span class="t" style="left:705.5px;top:269px;transform:scaleX(0.954);">3 bł.hasła</span>
<div class="fs" style="left:556px;top:293px;width:233px;height:278px;"></div>
<div class="a" style="left:563px;top:291px;width:80px;height:6px;background:#f0f0f0"></div>
<span class="t" style="left:564px;top:287.5px;transform:scaleX(0.915);">Pozostałe opcje</span>
<div class="cb d" style="left:562px;top:302px"></div>
<span class="t dis" style="left:580.5px;top:300.3px;transform:scaleX(0.884);">Alarm NAPAD cichy</span>
<div class="cb d" style="left:562px;top:317px"><svg width="11" height="11" viewBox="0 0 11 11" style="position:absolute;left:0;top:0"><path d="M1.500 4.500v3l2.500 2.500l4.500-4.500v-3l-4.500 4.500z" fill="#a0a0a0"/></svg></div>
<span class="t dis" style="left:580.5px;top:315.3px;transform:scaleX(0.885);">Sygn. czas na wejście</span>
<div class="cb d" style="left:562px;top:333px"><svg width="11" height="11" viewBox="0 0 11 11" style="position:absolute;left:0;top:0"><path d="M1.500 4.500v3l2.500 2.500l4.500-4.500v-3l-4.500 4.500z" fill="#a0a0a0"/></svg></div>
<span class="t dis" style="left:580.5px;top:331.3px;transform:scaleX(0.882);">Sygn. czas na wyjście</span>
<div class="cb" style="left:562px;top:349px"><svg width="11" height="11" viewBox="0 0 11 11" style="position:absolute;left:0;top:0"><path d="M1.500 4.500v3l2.500 2.500l4.500-4.500v-3l-4.500 4.500z" fill="#000"/></svg></div>
<span class="t" style="left:580.5px;top:347.3px;transform:scaleX(0.869);">Sygn. alarmów</span>
<div class="cb" style="left:562px;top:365px"><svg width="11" height="11" viewBox="0 0 11 11" style="position:absolute;left:0;top:0"><path d="M1.500 4.500v3l2.500 2.500l4.500-4.500v-3l-4.500 4.500z" fill="#000"/></svg></div>
<span class="t" style="left:580.5px;top:363.3px;transform:scaleX(0.879);">Dźwięki klawiszy</span>
<div class="cb" style="left:562px;top:380px"></div>
<span class="t" style="left:580.5px;top:378.3px;transform:scaleX(0.881);">S. awarii w cz. częśc.</span>
<div class="cb" style="left:562px;top:396px"></div>
<span class="t" style="left:580.5px;top:394.3px;transform:scaleX(0.875);">Sygn. nowej awarii</span>
<div class="cb" style="left:562px;top:412px"></div>
<span class="t" style="left:580.5px;top:410.3px;transform:scaleX(0.893);">Pokazuj wpisywanie hasła</span>
<div class="cb" style="left:562px;top:428px"></div>
<span class="t" style="left:580.5px;top:426.3px;transform:scaleX(0.877);">Pokazuj nazwę manipulatora</span>
<div class="cb" style="left:562px;top:444px"></div>
<span class="t" style="left:580.5px;top:442.3px;transform:scaleX(0.889);">Dost. skracanie czasu na wyjście</span>
<div class="cb" style="left:562px;top:459px"></div>
<span class="t" style="left:580.5px;top:457.3px;transform:scaleX(0.885);">Pokazuj nar. wejść</span>
<div class="cb" style="left:562px;top:475px"><svg width="11" height="11" viewBox="0 0 11 11" style="position:absolute;left:0;top:0"><path d="M1.500 4.500v3l2.500 2.500l4.500-4.500v-3l-4.500 4.500z" fill="#000"/></svg></div>
<span class="t" style="left:580.5px;top:473.3px;transform:scaleX(0.877);">Sygn. opóźnienia autouzbr.</span>
<div class="cb" style="left:562px;top:491px"></div>
<span class="t" style="left:580.5px;top:489.3px;transform:scaleX(0.876);">Wybór trybu wyśw.</span>
<div class="cb" style="left:562px;top:506px"></div>
<span class="t" style="left:580.5px;top:504.29999999999995px;transform:scaleX(0.893);">Komunikaty wył. czuwania</span>
<div class="cb" style="left:562px;top:522px"></div>
<span class="t" style="left:580.5px;top:520.3px;transform:scaleX(0.895);">Komunikaty zał. czuwania</span>
<div class="cb" style="left:562px;top:539px"><svg width="11" height="11" viewBox="0 0 11 11" style="position:absolute;left:0;top:0"><path d="M1.500 4.500v3l2.500 2.500l4.500-4.500v-3l-4.500 4.500z" fill="#000"/></svg></div>
<span class="tb" style="left:580.5px;top:538px;transform:scaleX(0.966);">Komunikacja RS</span>
<div class="cb" style="left:562px;top:555px"></div>
<span class="t" style="left:580.5px;top:553.3px;transform:scaleX(0.871);">Szybkie sterowanie</span>
<div class="a" style="left:290px;top:670px;width:533px;height:30px;border:1px solid;border-color:#fff #a0a0a0 #a0a0a0 #fff"></div>
<span class="t" style="left:297.5px;top:678px;transform:scaleX(0.847);">Komentarz:</span>
<div class="a sunk2" style="left:362px;top:675px;width:452px;height:19px;"></div>
<div class="a" style="left:826px;top:60px;width:2px;height:644px;background:#808080"></div>
<div class="a" style="left:9px;top:702px;width:819px;height:2px;background:#808080"></div>
<svg class="a" style="left:0;top:0;pointer-events:none" width="836" height="714" viewBox="0 0 836 714"><path d="M460.800 431L464.700 431C468 436.500 471.500 441.500 475.500 446.500C480 453 484.500 459 489.200 465C494.500 471 499.500 477 505 482.700C510.500 488.500 516.500 494.500 522.500 500.400C527.500 505.500 533 511 538.200 516L546.500 523.500L541.200 498.400L537.600 476L541.800 476L548 498.400L558.800 534.700L558.800 545.500L528.400 547L507.800 548.400L507.800 537.600L528.400 535.700L540.500 534.500L534.300 527.800C530 524.500 526 521.500 522.500 518C516.500 513 510.500 507.500 505 502.400C499.500 496.500 494 490.500 489.200 484.700C484 478.500 479.500 472 475.500 465C471.500 459 468.500 453 465.700 447.500C463.500 442 462 437 460.800 431Z" fill="#e84e00" fill-opacity=".88"/></svg>
</div></body></html>
